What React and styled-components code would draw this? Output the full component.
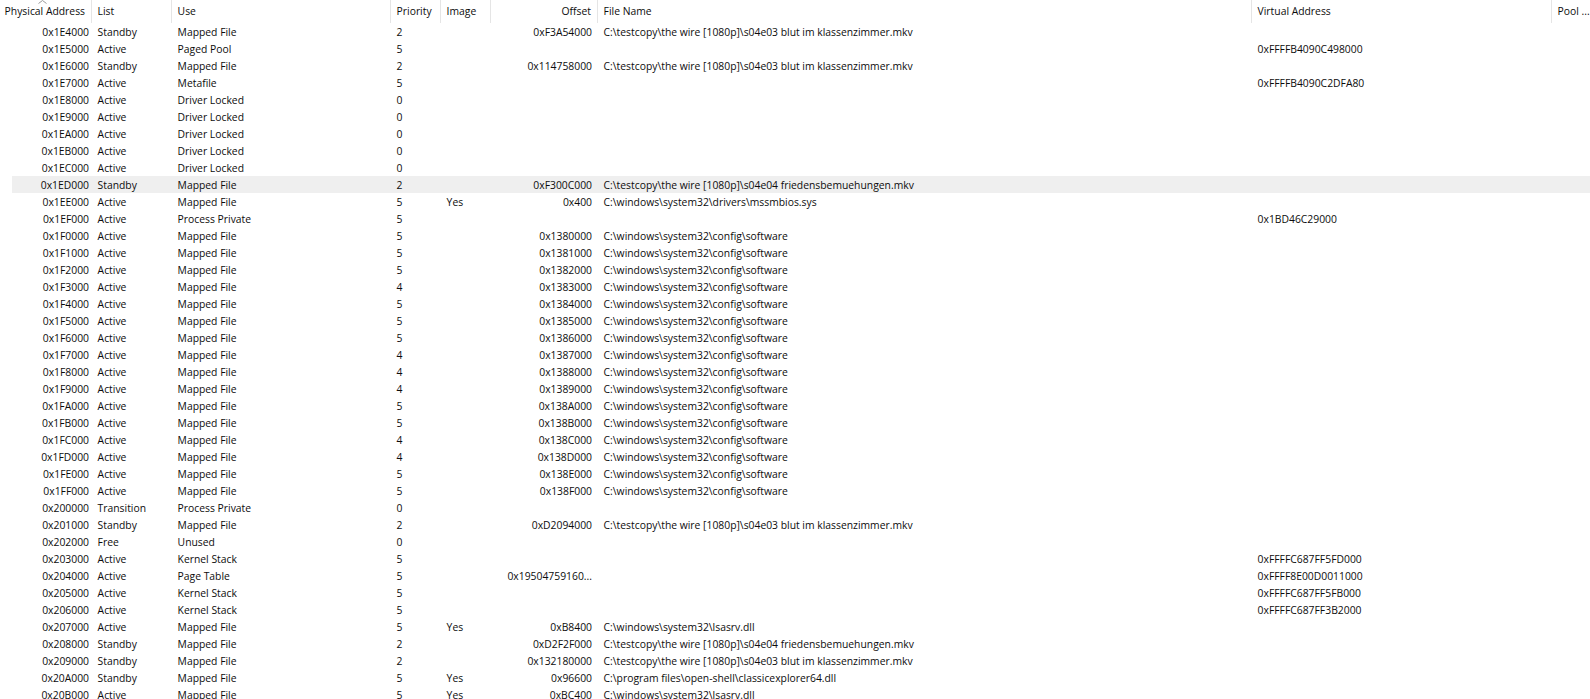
import React from "react";
import styled, { createGlobalStyle } from "styled-components";

const GlobalStyle = createGlobalStyle`
    html, body {
        margin: 0;
        padding: 0;
        background: #fff;
        overflow: hidden;
    }
`

const COLUMNS = "92px 80px 219px 50px 50px 107px 654px 300px 38px"

const columns = [
    { title: "Physical Address", right: true },
    { title: "List" },
    { title: "Use" },
    { title: "Priority" },
    { title: "Image" },
    { title: "Offset", right: true },
    { title: "File Name" },
    { title: "Virtual Address" },
    { title: "Pool ..." },
]

const WIRE = "C:\\testcopy\\the wire [1080p]\\"
const E03 = WIRE + "s04e03 blut im klassenzimmer.mkv"
const E04 = WIRE + "s04e04 friedensbemuehungen.mkv"
const SOFTWARE = "C:\\windows\\system32\\config\\software"
const LSASRV = "C:\\windows\\system32\\lsasrv.dll"

// address, list, use, priority, image, offset, file name, virtual address
const rows = [
    ["0x1E4000", "Standby", "Mapped File", "2", "", "0xF3A54000", E03, ""],
    ["0x1E5000", "Active", "Paged Pool", "5", "", "", "", "0xFFFFB4090C498000"],
    ["0x1E6000", "Standby", "Mapped File", "2", "", "0x114758000", E03, ""],
    ["0x1E7000", "Active", "Metafile", "5", "", "", "", "0xFFFFB4090C2DFA80"],
    ["0x1E8000", "Active", "Driver Locked", "0", "", "", "", ""],
    ["0x1E9000", "Active", "Driver Locked", "0", "", "", "", ""],
    ["0x1EA000", "Active", "Driver Locked", "0", "", "", "", ""],
    ["0x1EB000", "Active", "Driver Locked", "0", "", "", "", ""],
    ["0x1EC000", "Active", "Driver Locked", "0", "", "", "", ""],
    ["0x1ED000", "Standby", "Mapped File", "2", "", "0xF300C000", E04, ""],
    ["0x1EE000", "Active", "Mapped File", "5", "Yes", "0x400", "C:\\windows\\system32\\drivers\\mssmbios.sys", ""],
    ["0x1EF000", "Active", "Process Private", "5", "", "", "", "0x1BD46C29000"],
    ["0x1F0000", "Active", "Mapped File", "5", "", "0x1380000", SOFTWARE, ""],
    ["0x1F1000", "Active", "Mapped File", "5", "", "0x1381000", SOFTWARE, ""],
    ["0x1F2000", "Active", "Mapped File", "5", "", "0x1382000", SOFTWARE, ""],
    ["0x1F3000", "Active", "Mapped File", "4", "", "0x1383000", SOFTWARE, ""],
    ["0x1F4000", "Active", "Mapped File", "5", "", "0x1384000", SOFTWARE, ""],
    ["0x1F5000", "Active", "Mapped File", "5", "", "0x1385000", SOFTWARE, ""],
    ["0x1F6000", "Active", "Mapped File", "5", "", "0x1386000", SOFTWARE, ""],
    ["0x1F7000", "Active", "Mapped File", "4", "", "0x1387000", SOFTWARE, ""],
    ["0x1F8000", "Active", "Mapped File", "4", "", "0x1388000", SOFTWARE, ""],
    ["0x1F9000", "Active", "Mapped File", "4", "", "0x1389000", SOFTWARE, ""],
    ["0x1FA000", "Active", "Mapped File", "5", "", "0x138A000", SOFTWARE, ""],
    ["0x1FB000", "Active", "Mapped File", "5", "", "0x138B000", SOFTWARE, ""],
    ["0x1FC000", "Active", "Mapped File", "4", "", "0x138C000", SOFTWARE, ""],
    ["0x1FD000", "Active", "Mapped File", "4", "", "0x138D000", SOFTWARE, ""],
    ["0x1FE000", "Active", "Mapped File", "5", "", "0x138E000", SOFTWARE, ""],
    ["0x1FF000", "Active", "Mapped File", "5", "", "0x138F000", SOFTWARE, ""],
    ["0x200000", "Transition", "Process Private", "0", "", "", "", ""],
    ["0x201000", "Standby", "Mapped File", "2", "", "0xD2094000", E03, ""],
    ["0x202000", "Free", "Unused", "0", "", "", "", ""],
    ["0x203000", "Active", "Kernel Stack", "5", "", "", "", "0xFFFFC687FF5FD000"],
    ["0x204000", "Active", "Page Table", "5", "", "0x19504759160...", "", "0xFFFF8E00D0011000"],
    ["0x205000", "Active", "Kernel Stack", "5", "", "", "", "0xFFFFC687FF5FB000"],
    ["0x206000", "Active", "Kernel Stack", "5", "", "", "", "0xFFFFC687FF3B2000"],
    ["0x207000", "Active", "Mapped File", "5", "Yes", "0xB8400", LSASRV, ""],
    ["0x208000", "Standby", "Mapped File", "2", "", "0xD2F2F000", E04, ""],
    ["0x209000", "Standby", "Mapped File", "2", "", "0x132180000", E03, ""],
    ["0x20A000", "Standby", "Mapped File", "5", "Yes", "0x96600", "C:\\program files\\open-shell\\classicexplorer64.dll", ""],
    ["0x20B000", "Active", "Mapped File", "5", "Yes", "0xBC400", LSASRV, ""],
]

const App = () => {
    return (
        <Wrap>
            <GlobalStyle />
            <Header>
                {columns.map((c, i) => (
                    <HeaderCell key={c.title} $right={c.right} $first={i === 0}>
                        {i === 0 && (
                            <SortCaret width="9" height="4" viewBox="0 0 9 4">
                                <path d="M0.5 3.5 L4.5 0.5 L8.5 3.5" fill="none" stroke="#9a9a9a" strokeWidth="1" />
                            </SortCaret>
                        )}
                        {c.title}
                    </HeaderCell>
                ))}
            </Header>
            {rows.map(r => (
                <Row key={r[0]} $selected={r[0] === "0x1ED000"}>
                    {r.map((v, i) => (
                        <Cell key={i} $right={columns[i].right} $first={i === 0}>{v}</Cell>
                    ))}
                </Row>
            ))}
        </Wrap>
    );
}

const Wrap = styled.div`
    width: 1590px;
    height: 699px;
    overflow: hidden;
    background: #fff;
    color: #0c0c0c;
    font-family: "Open Sans", "Liberation Sans", sans-serif;
    font-size: 10.35px;
`

const Header = styled.div`
    display: grid;
    grid-template-columns: ${COLUMNS};
    height: 23px;
`

const HeaderCell = styled.div`
    position: relative;
    display: flex;
    align-items: center;
    justify-content: ${p => (p.$right ? "flex-end" : "flex-start")};
    padding: ${p => (p.$first ? "0 6px 1px 5px" : p.$right ? "0 6px 1px" : "0 6px 1px 5.6px")};
    border-right: 1px solid #e5e5e5;
    white-space: nowrap;
    box-sizing: border-box;
    &:last-child {
        border-right: none;
    }
`

const SortCaret = styled.svg`
    position: absolute;
    top: 0;
    left: 38px;
`

const Row = styled.div`
    display: grid;
    grid-template-columns: ${COLUMNS};
    height: 17px;
    line-height: 17px;
    background: ${p => (p.$selected ? "linear-gradient(to right, transparent 12px, #efefef 12px)" : "transparent")};
`

const Cell = styled.div`
    padding: ${p => (p.$first ? "1px 3px 0 0" : p.$right ? "1px 6px 0" : "1px 6px 0 5.6px")};
    height: 17px;
    text-align: ${p => (p.$right ? "right" : "left")};
    white-space: nowrap;
    box-sizing: border-box;
`

export default App;
